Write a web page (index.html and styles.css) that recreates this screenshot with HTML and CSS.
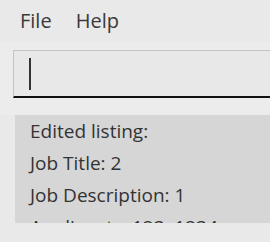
FILE: index.html
```html
<!DOCTYPE html>
<html>
<head>
<meta charset="utf-8">
<link rel="stylesheet" href="styles.css">
</head>
<body>
<div class="app">
  <div class="menubar">
    <span class="menu-item">File</span>
    <span class="menu-item">Help</span>
  </div>
  <div class="cmd-area">
    <div class="cmd-box"><span class="caret"></span></div>
  </div>
  <div class="result-area">
    <div class="result-box">
      <div class="line">Edited listing:</div>
      <div class="line">Job Title: 2</div>
      <div class="line">Job Description: 1</div>
      <div class="line">Applicants: 123, 1234</div>
    </div>
  </div>
</div>
</body>
</html>
```

FILE: styles.css
```css
html, body {
  margin: 0;
  padding: 0;
}
body {
  width: 270px;
  height: 242px;
  overflow: hidden;
  background: #e9e9e9;
  font-family: "Open Sans", "Noto Sans", sans-serif;
  color: #333333;
}
.app {
  display: flex;
  flex-direction: column;
}
.menubar {
  height: 42px;
  display: flex;
  align-items: center;
  gap: 24px;
  padding-left: 20px;
  font-size: 20px;
  color: #3a3a3a;
  box-sizing: border-box;
  padding-bottom: 2px;
}
.cmd-area {
  background: #ececec;
  padding: 8px 0 0 13px;
  height: 73px;
  box-sizing: border-box;
}
.cmd-box {
  width: 300px;
  height: 48px;
  box-sizing: border-box;
  border: 1px solid #c4c4c4;
  border-bottom: 2px solid #111111;
  background: #e8e8e8;
  display: flex;
  align-items: center;
  padding-left: 15px;
}
.caret {
  width: 2px;
  height: 32px;
  background: #333333;
}
.result-area {
  padding-left: 15px;
}
.result-box {
  height: 108px;
  background: #d6d6d6;
  overflow: hidden;
  padding-left: 15px;
  box-sizing: border-box;
  font-size: 19px;
  color: #333333;
}
.line {
  height: 32px;
  line-height: 32px;
  white-space: nowrap;
}
```
